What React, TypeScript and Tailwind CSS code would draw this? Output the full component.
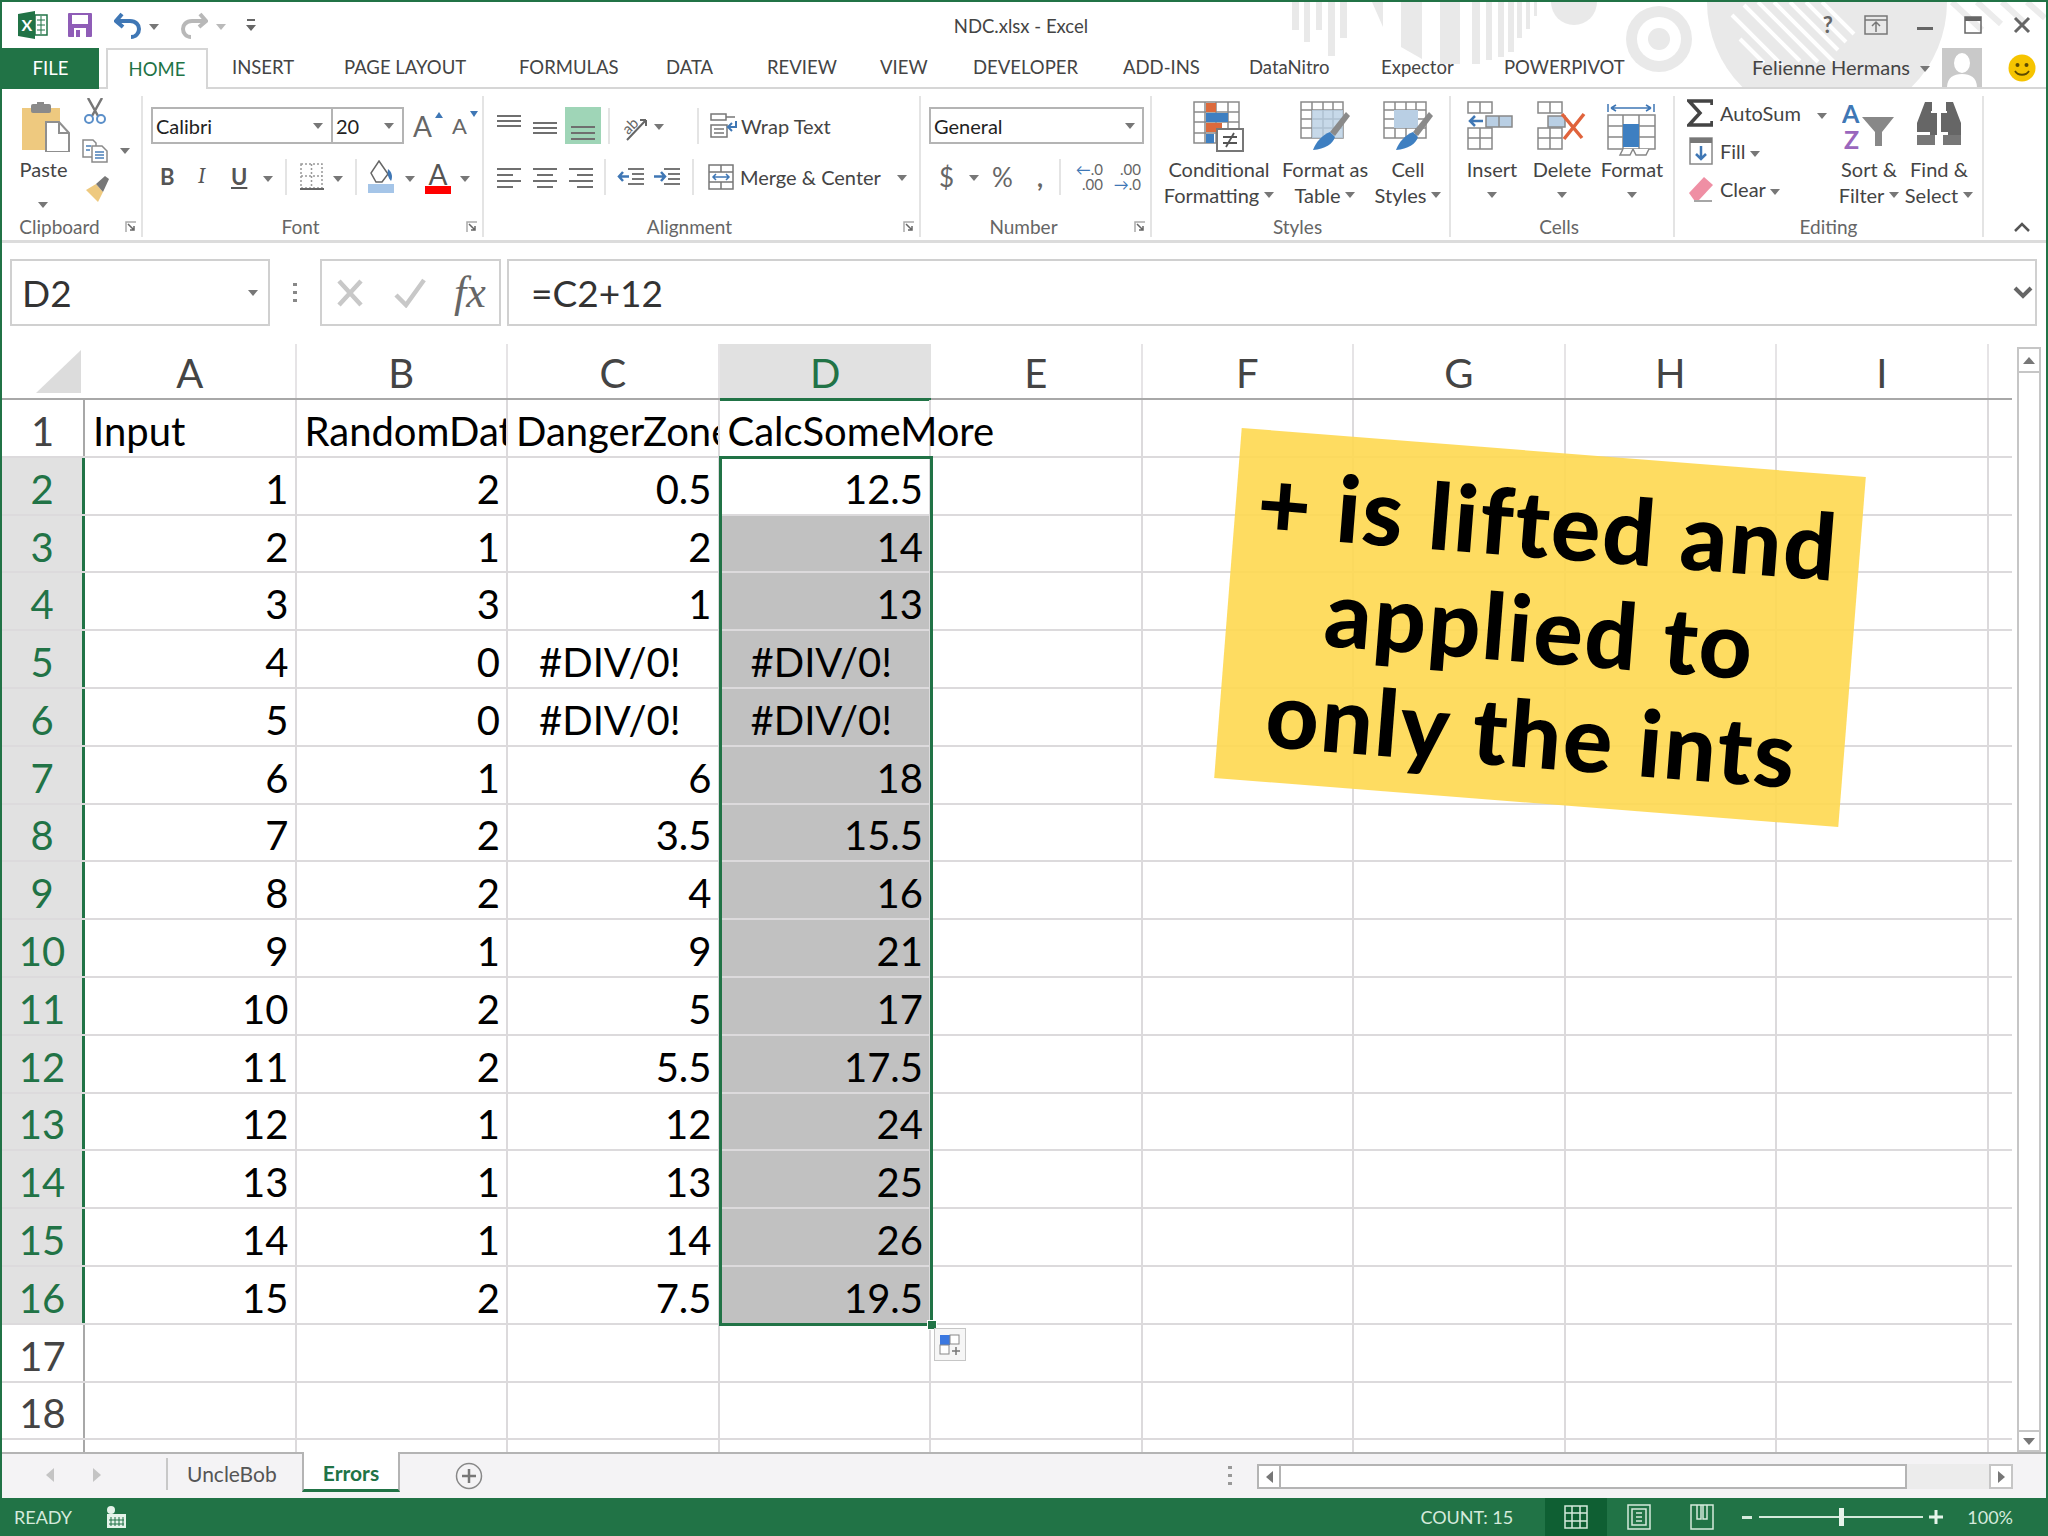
import React from 'react'

const GREEN = '#217346'

const Caret = ({ dark = false }: { dark?: boolean }) => (
  <svg width="10" height="6" className="shrink-0 inline-block">
    <path d="M0 0h10L5 6z" fill={dark ? '#555' : '#777'} />
  </svg>
)

const Launcher = () => (
  <svg width="12" height="12" className="shrink-0">
    <path d="M1 11V1h10" fill="none" stroke="#aaa" strokeWidth="1.5" />
    <path d="M3 3l6 6M9 5v4H5" fill="none" stroke="#666" strokeWidth="1.5" />
  </svg>
)

const Lines = ({ rows, w = 26, h = 30 }: { rows: number[][]; w?: number; h?: number }) => (
  <svg width={w} height={h} className="shrink-0">
    {rows.map((r, i) => (
      <rect key={i} x={r[0]} y={r[2]} width={r[1] - r[0]} height="2" fill="#6f6f6f" />
    ))}
  </svg>
)

const Sep = () => <div className="w-[2px] h-[36px] shrink-0 bg-[#e4e4e4]" />

const PasteIcon = () => (
  <svg width="50" height="50">
    <rect x="0" y="6" width="38" height="42" fill="#eec97f" />
    <rect x="9" y="2" width="20" height="9" rx="2" fill="#8a8a8a" />
    <rect x="15" y="0" width="7" height="5" fill="#8a8a8a" />
    <path d="M24 20h13l10 11v19H24z" fill="#fff" stroke="#8f8f8f" strokeWidth="2" />
    <path d="M37 20v11h10" fill="none" stroke="#8f8f8f" strokeWidth="2" />
  </svg>
)

const ScissorsIcon = () => (
  <svg width="26" height="26">
    <path d="M6 0l10 18M20 0L10 18" stroke="#777" strokeWidth="2.5" fill="none" />
    <circle cx="7" cy="21" r="4" fill="none" stroke="#5b8fc9" strokeWidth="2" />
    <circle cx="19" cy="21" r="4" fill="none" stroke="#5b8fc9" strokeWidth="2" />
  </svg>
)

const CopyIcon = () => (
  <svg width="26" height="24">
    <path d="M1 1h10l3 3v14H1z" fill="#fff" stroke="#8a8a8a" strokeWidth="1.5" />
    <path d="M10 7h10l5 5v11H10z" fill="#fff" stroke="#8a8a8a" strokeWidth="1.5" />
    <path d="M4 7h5M4 11h4M13 13h9M13 16h9M13 19h9" stroke="#4a7fb8" strokeWidth="1.5" />
  </svg>
)

const BrushIcon = () => (
  <svg width="28" height="28">
    <path d="M2 16l10-6 7 8-5 10z" fill="#eec97f" />
    <path d="M12 10l9-8 4 3-6 13z" fill="#777" />
  </svg>
)

const BorderIcon = () => (
  <svg width="24" height="28">
    <rect x="1" y="1" width="21" height="24" fill="none" stroke="#999" strokeWidth="1.5" strokeDasharray="2 2" />
    <path d="M11.5 1v24M1 13h21" stroke="#999" strokeWidth="1.5" strokeDasharray="2 2" />
    <path d="M0 26h24" stroke="#666" strokeWidth="2" />
  </svg>
)

const FillIcon = () => (
  <svg width="28" height="34">
    <path d="M12 1l9 13-6 8H9l-5-9z" fill="#fff" stroke="#666" strokeWidth="1.5" />
    <path d="M21 9c4 3 5 8 3 12-3-3-4-7-3-12z" fill="#3f77b5" />
    <rect x="1" y="24" width="26" height="9" fill="#a5c5e8" />
  </svg>
)

const OrientIcon = () => (
  <svg width="30" height="32">
    <text x="2" y="20" fontSize="15" fill="#666" transform="rotate(-45 12 14)" fontFamily="Lato, sans-serif">ab</text>
    <path d="M8 30L27 10M27 10h-6M27 10v6" stroke="#666" strokeWidth="2" fill="none" />
  </svg>
)

const IndentIcon = ({ flip = false }: { flip?: boolean }) => (
  <svg width="28" height="22">
    <path d="M11 3h16M15 8h12M15 13h12M11 18h16" stroke="#777" strokeWidth="2" />
    <path d={flip ? 'M1 10.5h11M8 6l4 4.5L8 15' : 'M12 10.5H2M6 6l-4 4.5L6 15'} stroke="#3f77b5" strokeWidth="2.5" fill="none" />
  </svg>
)

const WrapIcon = () => (
  <svg width="28" height="28">
    <path d="M1 2h15v6H1zM1 13h16v12H1z" fill="#fff" stroke="#777" strokeWidth="1.5" />
    <path d="M16 5h9M4 17h10M4 21h10" stroke="#777" strokeWidth="1.5" />
    <path d="M26 9v6h-7M22 11l-4 4 4 4" stroke="#3f77b5" strokeWidth="2" fill="none" />
  </svg>
)

const MergeIcon = () => (
  <svg width="26" height="26">
    <rect x="1" y="1" width="24" height="24" fill="#fff" stroke="#777" strokeWidth="1.5" />
    <path d="M1 8h24M1 18h24M13 1v7M13 18v7" stroke="#777" strokeWidth="1.5" />
    <path d="M5 13h16M8 10l-3 3 3 3M18 10l3 3-3 3" stroke="#3f77b5" strokeWidth="1.5" fill="none" />
  </svg>
)

const CondIcon = () => (
  <svg width="52" height="52">
    <path d="M1 1h45v41H1zM1 11h45M1 21h45M1 32h45M12 1v41M23 1v41M35 1v41" fill="#fff" stroke="#8a8a8a" strokeWidth="1.5" />
    <rect x="13" y="2" width="10" height="9" fill="#dc6a3c" />
    <rect x="13" y="12" width="22" height="9" fill="#3e7fc1" />
    <rect x="13" y="22" width="16" height="9" fill="#dc6a3c" />
    <rect x="13" y="33" width="8" height="9" fill="#3e7fc1" />
    <rect x="24" y="28" width="26" height="22" fill="#fff" stroke="#777" strokeWidth="2" />
    <path d="M30 36h14M30 42h14M41 32l-8 14" stroke="#555" strokeWidth="1.8" />
  </svg>
)

const TableIcon = ({ cell = false }: { cell?: boolean }) => (
  <svg width="50" height="50">
    <path d="M1 1h42v36H1zM1 9h42M1 18h42M1 27h42M12 1v36M23 1v36M33 1v36" fill="#fff" stroke="#8a8a8a" strokeWidth="1.5" />
    {cell ? <rect x="11" y="9" width="24" height="18" fill="#b9cfe4" /> : <rect x="12" y="9" width="31" height="28" fill="#b9cfe4" opacity="0.8" />}
    <path d="M30 31l16-20 4 4-15 20z" fill="#8a8a8a" />
    <path d="M30 31l5 5c-2 7-10 12-22 13 3-8 9-15 17-18z" fill="#3e7fc1" />
  </svg>
)

const InsertIcon = () => (
  <svg width="50" height="50">
    <path d="M1 1h24v11H1zM13 1v11M1 27h24v21H1zM1 37h24M13 27v21" fill="#fff" stroke="#888" strokeWidth="1.5" />
    <rect x="19" y="15" width="26" height="11" fill="#b9cfe4" stroke="#888" strokeWidth="1.5" />
    <path d="M32 15v11" stroke="#888" strokeWidth="1.5" />
    <path d="M16 20H3M8 15l-5 5 5 5" stroke="#3f77b5" strokeWidth="2.5" fill="none" />
  </svg>
)

const DeleteIcon = () => (
  <svg width="50" height="50">
    <path d="M1 1h24v11H1zM13 1v11M1 27h24v21H1zM1 37h24M13 27v21" fill="#fff" stroke="#888" strokeWidth="1.5" />
    <rect x="11" y="15" width="17" height="11" fill="#b9cfe4" stroke="#888" strokeWidth="1.5" />
    <path d="M25 13l20 24M47 13L27 38" stroke="#e0633c" strokeWidth="3.5" />
  </svg>
)

const FormatIcon = () => (
  <svg width="50" height="56">
    <path d="M1 3v8M47 3v8M4 7h40M4 7l5-3M4 7l5 3M44 7l-5-3M44 7l-5 3" stroke="#3f77b5" strokeWidth="1.5" fill="none" />
    <path d="M1 14h47v34H1zM1 25h47M1 36h47M16 14v34M32 14v34" fill="#fff" stroke="#888" strokeWidth="1.5" />
    <rect x="16" y="23" width="16" height="23" fill="#3e7fc1" />
    <path d="M16 48l-3 6h10l3-6M26 48l3 6h10l3-6" fill="#fff" stroke="#888" strokeWidth="1.5" />
  </svg>
)

const SortIcon = () => (
  <svg width="54" height="52">
    <text x="0" y="22" fontSize="25" fontWeight="700" fill="#3f77b5" fontFamily="Lato, sans-serif">A</text>
    <text x="2" y="48" fontSize="25" fontWeight="700" fill="#9a67bd" fontFamily="Lato, sans-serif">Z</text>
    <path d="M20 16h32L40 31v14h-7V31z" fill="#888" />
  </svg>
)

const FindIcon = () => (
  <svg width="48" height="46">
    <path d="M10 1h7v9h-1v2h6v22h-7v-3H2V22zM31 1h7l8 21v12H33v-3h-7V12h6v-2h-1z" fill="#666" />
    <rect x="2" y="34" width="18" height="10" fill="#777" />
    <rect x="28" y="34" width="18" height="10" fill="#777" />
  </svg>
)

const BigBtn = ({ icon, lines, w }: { icon: React.ReactNode; lines: string[]; w: number }) => (
  <div className="flex flex-col items-center shrink-0 text-[20px] text-[#444]" style={{ width: w }}>
    <div className="h-[60px] pt-[5px] flex items-start justify-center">{icon}</div>
    <div className="h-[26px] leading-[26px] whitespace-nowrap">{lines[0]}</div>
    <div className="h-[26px] leading-[26px] whitespace-nowrap flex items-center gap-[5px]">
      {lines[1]}
      <Caret />
    </div>
  </div>
)

const Group = ({
  label,
  w,
  launcher = false,
  labelClass = '',
  children,
}: {
  label: string
  w: number
  launcher?: boolean
  labelClass?: string
  children: React.ReactNode
}) => (
  <div className="h-[141px] flex flex-col border-r-2 border-[#e4e4e4] shrink-0" style={{ width: w }}>
    <div className="flex-1 min-h-0 relative">{children}</div>
    <div className={`h-[22px] flex items-center relative text-[19px] text-[#666] ${labelClass}`}>
      <span className="flex-1 text-center leading-none">{label}</span>
      {launcher && (
        <span className="absolute right-[4px] top-[6px]">
          <Launcher />
        </span>
      )}
    </div>
  </div>
)

const ToolRows = ({ children }: { children: React.ReactNode }) => (
  <div className="flex flex-col pt-[11px] gap-[14px]">{children}</div>
)

const tabs: [string, string][] = [
  ['INSERT', 'w-[112px]'],
  ['PAGE LAYOUT', 'w-[175px]'],
  ['FORMULAS', 'w-[147px]'],
  ['DATA', 'w-[101px]'],
  ['REVIEW', 'w-[113px]'],
  ['VIEW', 'w-[93px]'],
  ['DEVELOPER', 'w-[150px]'],
  ['ADD-INS', 'w-[126px]'],
  ['DataNitro', 'w-[132px]'],
  ['Expector', 'w-[123px]'],
  ['POWERPIVOT', 'w-[125px]'],
]

const columns = ['A', 'B', 'C', 'D', 'E', 'F', 'G', 'H', 'I', 'J']

const data: (string | number)[][] = [
  [1, 2, 0.5, 12.5],
  [2, 1, 2, 14],
  [3, 3, 1, 13],
  [4, 0, '#DIV/0!', '#DIV/0!'],
  [5, 0, '#DIV/0!', '#DIV/0!'],
  [6, 1, 6, 18],
  [7, 2, 3.5, 15.5],
  [8, 2, 4, 16],
  [9, 1, 9, 21],
  [10, 2, 5, 17],
  [11, 2, 5.5, 17.5],
  [12, 1, 12, 24],
  [13, 1, 13, 25],
  [14, 1, 14, 26],
  [15, 2, 7.5, 19.5],
]

const cellBase = 'w-[211.5px] shrink-0 h-full pt-[6px] border-r-2 border-[#dcdadc] flex items-center'
const rowBase = 'h-[57.8px] flex border-b-2 border-[#dcdadc] text-[40px] text-black'

const RowHead = ({ n, active = false }: { n: number; active?: boolean }) => (
  <div
    className={
      active
        ? 'w-[83px] shrink-0 h-full pt-[6px] bg-[#e1e1e1] border-r-[3px] border-[#217346] text-[#217346] flex items-center justify-center'
        : 'w-[83px] shrink-0 h-full pt-[6px] border-r-2 border-[#a8a8a8] text-[#444] flex items-center justify-center'
    }
  >
    {n}
  </div>
)

const Sheet = () => (
  <div className="relative w-[2010px] h-full overflow-hidden">
    <div className="h-[56px] flex border-b-2 border-[#a8a8a8] text-[40px] text-[#444]">
      <div className="w-[83px] shrink-0 h-full flex items-end pl-[34px] pb-[5px]">
        <svg width="46" height="43">
          <path d="M45 0v43H0z" fill="#dcdcdc" />
        </svg>
      </div>
      {columns.map(c => (
        <div
          key={c}
          className={
            c === 'D'
              ? 'w-[211.5px] shrink-0 h-[57px] pt-[4px] bg-[#e1e1e1] border-b-[3px] border-[#217346] text-[#217346] flex items-center justify-center'
              : 'w-[211.5px] shrink-0 h-full pt-[4px] border-r-2 border-[#e6e4e6] flex items-center justify-center'
          }
        >
          {c}
        </div>
      ))}
    </div>
    <div className={rowBase}>
      <RowHead n={1} />
      {['Input', 'RandomData', 'DangerZone', 'CalcSomeMore'].map((t, i) => (
        <div key={t} className={`${cellBase} pl-[8px] whitespace-nowrap ${i < 3 ? 'overflow-hidden' : 'overflow-visible border-r-0'}`}>
          {t}
        </div>
      ))}
      {columns.slice(4).map(c => (
        <div key={c} className={cellBase} />
      ))}
    </div>
    {data.map((row, r) => (
      <div key={r} className={rowBase}>
        <RowHead n={r + 2} active />
        {row.map((v, c) => (
          <div
            key={c}
            className={`${cellBase} pr-[6px] ${typeof v === 'string' ? 'justify-center' : 'justify-end'} ${
              c === 3 && r > 0 ? 'bg-[#c1c1c1] border-[#c1c1c1]' : ''
            }`}
          >
            {v}
          </div>
        ))}
        {columns.slice(4).map(c => (
          <div key={c} className={cellBase} />
        ))}
      </div>
    ))}
    {[17, 18, 19].map(n => (
      <div key={n} className={rowBase}>
        <RowHead n={n} />
        {columns.map(c => (
          <div key={c} className={cellBase} />
        ))}
      </div>
    ))}
    <div className="absolute left-[717px] top-[112px] w-[214px] h-[870px] border-[3px] border-[#217346] pointer-events-none" />
    <div className="absolute left-[925px] top-[976px] w-[10px] h-[10px] bg-[#217346] border border-white" />
    <div className="absolute left-[932px] top-[984px] w-[32px] h-[33px] bg-[#f6f6f6] border border-[#c6c6c6] flex items-center justify-center">
      <svg width="24" height="24">
        <rect x="2" y="2" width="10" height="10" fill="#3b78e0" />
        <rect x="12" y="2" width="9" height="9" fill="#fff" stroke="#888" />
        <rect x="2" y="12" width="9" height="9" fill="#fff" stroke="#888" />
        <path d="M14 18h8M18 14v8" stroke="#777" strokeWidth="1.5" />
      </svg>
    </div>
  </div>
)

const Note = () => (
  <div className="absolute left-[1225px] top-[450px] w-[626px] h-[351px] rotate-[4.5deg] bg-[#fed850]/90 flex flex-col items-center justify-center text-black font-black text-[92px] tracking-[2px] leading-[105px] whitespace-nowrap">
    <div>+ is lifted and</div>
    <div>applied to</div>
    <div>only the ints</div>
  </div>
)

const Watermark = () => (
  <svg width="2048" height="86" className="absolute left-0 top-0" fill="#e9e9e9">
    <rect x="1290" width="7" height="28" />
    <rect x="1302" width="6" height="40" />
    <rect x="1314" width="6" height="28" />
    <rect x="1326" width="7" height="54" />
    <rect x="1338" width="7" height="36" />
    <path d="M1370 0h11v25zM1399 0h21v57l-21-12z" />
    <rect x="1438" width="20" height="62" />
    <rect x="1470" width="8" height="62" />
    <rect x="1484" width="6" height="58" />
    <rect x="1496" width="6" height="55" />
    <rect x="1506" width="6" height="50" />
    <rect x="1515" width="5" height="36" />
    <rect x="1524" width="4" height="27" />
    <rect x="1532" width="3" height="14" />
    <circle cx="1572" cy="0" r="23" />
    <circle cx="1657" cy="37" r="33" />
    <circle cx="1657" cy="37" r="22" fill="#fff" />
    <circle cx="1657" cy="37" r="11" />
    <circle cx="1825" cy="0" r="120" />
    <path d="M1730 13l50 50M1738 37l24 24M1742 3l56 56M1756 0l60 60M1772 0l60 60M1788 0l48 48M1804 0l40 40M1820 0l32 32" stroke="#fff" strokeWidth="4" />
    <path d="M1950 0l30 28M1975 0l24 22M2000 0l24 22M2025 0l18 16" stroke="#ececec" strokeWidth="6" />
  </svg>
)

const TitleBar = () => (
  <div className="relative h-[46px] flex items-center shrink-0">
    <Watermark />
    <div className="absolute inset-x-0 top-0 h-full pr-[6px] pt-[3px] flex items-center justify-center text-[18.5px] text-[#444]">NDC.xlsx - Excel</div>
    <div className="relative flex items-center w-full h-full">
      <svg width="30" height="28" className="ml-[16px]">
        <path d="M0 3L17 0v28L0 25z" fill={GREEN} />
        <rect x="17" y="4" width="12" height="20" fill="#fff" stroke={GREEN} strokeWidth="1.5" />
        <path d="M19 9h8M19 14h8M19 19h8M23 5v18" stroke={GREEN} strokeWidth="1" />
        <text x="3.5" y="20" fontSize="16" fontWeight="700" fill="#fff" fontFamily="Lato, sans-serif">X</text>
      </svg>
      <svg width="24" height="24" className="ml-[20px]">
        <rect x="0" y="0" width="24" height="24" rx="1" fill="#8f5db7" />
        <rect x="4" y="2" width="16" height="9" fill="#fff" />
        <rect x="6" y="15" width="12" height="9" fill="#fff" />
        <rect x="8" y="17" width="4" height="7" fill="#8f5db7" />
      </svg>
      <svg width="30" height="28" className="ml-[22px]">
        <path d="M8 3L2 10l7 6M3 10h13c6 0 9 4 9 8s-3 8-8 8" fill="none" stroke="#3f77b5" strokeWidth="4" />
      </svg>
      <span className="ml-[5px]">
        <Caret />
      </span>
      <svg width="28" height="28" className="ml-[21px]">
        <path d="M20 3l6 7-7 6M25 10H12c-6 0-9 4-9 8s3 8 8 8" fill="none" stroke="#b8b8b8" strokeWidth="4" />
      </svg>
      <span className="ml-[8px] opacity-50">
        <Caret />
      </span>
      <svg width="12" height="14" className="ml-[19px]">
        <path d="M2 1h8v2H2zM1 7h10L6 13z" fill="#666" />
      </svg>
      <div className="ml-auto flex items-center">
        <span className="w-[48.5px] flex justify-center text-[22px] font-bold leading-none text-[#666]">?</span>
        <span className="w-[48.5px] flex justify-center">
          <svg width="24" height="20">
            <rect x="1" y="1" width="22" height="18" fill="none" stroke="#777" strokeWidth="1.5" />
            <path d="M1 5h22M12 17V8M8 11l4-4 4 4" stroke="#777" strokeWidth="1.5" fill="none" />
          </svg>
        </span>
        <span className="w-[48.5px] flex justify-center pt-[10px]">
          <svg width="16" height="6">
            <rect width="16" height="3" fill="#666" />
          </svg>
        </span>
        <span className="w-[48.5px] flex justify-center">
          <svg width="18" height="18">
            <rect x="1" y="1" width="16" height="16" fill="none" stroke="#666" strokeWidth="1.5" />
            <rect x="1" y="1" width="16" height="4" fill="#666" />
          </svg>
        </span>
        <span className="w-[48.5px] flex justify-center">
          <svg width="18" height="18">
            <path d="M2 2l14 14M16 2L2 16" stroke="#666" strokeWidth="3" />
          </svg>
        </span>
      </div>
    </div>
  </div>
)

const TabRow = () => (
  <div className="relative h-[41px] flex items-stretch border-b-2 border-[#d6d6d6] shrink-0 text-[18.5px]">
    <div className="w-[97px] h-[41px] bg-[#217346] text-white flex items-center justify-center">FILE</div>
    <div className="ml-[7px] w-[102px] h-[41px] bg-white border-x-2 border-t-2 border-[#d6d6d6] text-[#217346] flex items-center justify-center">HOME</div>
    <div className="ml-[24px] flex items-center">
      {tabs.map(([label, width]) => (
        <div key={label} className={`whitespace-nowrap text-[#444] ${width}`}>
          {label}
        </div>
      ))}
    </div>
    <div className="ml-auto flex items-center h-full">
      <span className="text-[20px] text-[#444] whitespace-nowrap mb-[2px]">Felienne Hermans</span>
      <span className="ml-[10px]">
        <Caret />
      </span>
      <div className="ml-[12px] w-[40px] h-[39px] bg-[#c9c9c9] overflow-hidden">
        <svg width="40" height="40">
          <ellipse cx="20" cy="15" rx="8" ry="10" fill="#fff" />
          <path d="M5 40c0-10 6-14 15-14s15 4 15 14z" fill="#fff" />
        </svg>
      </div>
      <svg width="28" height="28" className="ml-[26px] mr-[10px]">
        <circle cx="14" cy="14" r="13.5" fill="#f6c400" />
        <circle cx="9.5" cy="11" r="2" fill="#5c4a00" />
        <circle cx="18.5" cy="11" r="2" fill="#5c4a00" />
        <path d="M7 17c3 5 11 5 14 0" fill="none" stroke="#5c4a00" strokeWidth="1.8" />
      </svg>
    </div>
  </div>
)

const Ribbon = () => (
  <div className="relative h-[154px] flex items-start pt-[7px] border-b-[3px] border-[#dcdcdc] shrink-0 text-[#444]">
    <Group label="Clipboard" w={141} launcher labelClass="pr-[24px]">
      <div className="absolute left-[20px] top-[6px]">
        <PasteIcon />
      </div>
      <div className="absolute left-0 top-[60px] w-[83px] text-center text-[20px] leading-[26px]">Paste</div>
      <div className="absolute left-[36px] top-[95px]">
        <Caret />
      </div>
      <div className="absolute left-[80px] top-[2px]">
        <ScissorsIcon />
      </div>
      <div className="absolute left-[80px] top-[43px] flex items-center gap-[12px]">
        <CopyIcon />
        <Caret />
      </div>
      <div className="absolute left-[82px] top-[78px]">
        <BrushIcon />
      </div>
    </Group>

    <Group label="Font" w={341} launcher labelClass="pr-[24px]">
      <ToolRows>
        <div className="flex items-center h-[37px] ml-[8px]">
          <div className="w-[182px] h-[37px] border-2 border-[#b4b4b4] flex items-center justify-between pl-[3px] pr-[8px] text-[20px] text-[#222]">
            Calibri <Caret />
          </div>
          <div className="w-[71px] h-[37px] border-2 border-l-0 border-[#b4b4b4] flex items-center justify-between pl-[3px] pr-[8px] text-[20px] text-[#222]">
            20 <Caret />
          </div>
          <div className="ml-[9px] w-[24px] text-[28px] leading-none text-[#666] relative">
            A
            <svg width="8" height="6" className="absolute right-[-6px] top-0">
              <path d="M0 6h8L4 0z" fill="#3f77b5" />
            </svg>
          </div>
          <div className="ml-[15px] w-[20px] text-[22px] leading-none text-[#666] relative">
            A
            <svg width="8" height="6" className="absolute right-[-6px] top-[-4px]">
              <path d="M0 0h8L4 6z" fill="#3f77b5" />
            </svg>
          </div>
        </div>
        <div className="flex items-center h-[37px] text-[22px] text-[#555]">
          <span className="ml-[17px] w-[14px] font-bold">B</span>
          <span className="ml-[24px] w-[10px] italic font-serif">I</span>
          <span className="ml-[23px] w-[16px] underline font-bold">U</span>
          <span className="ml-[16px]"><Caret /></span>
          <span className="ml-[12px]"><Sep /></span>
          <span className="ml-[13px]"><BorderIcon /></span>
          <span className="ml-[9px]"><Caret /></span>
          <span className="ml-[12px]"><Sep /></span>
          <span className="ml-[10px]"><FillIcon /></span>
          <span className="ml-[10px]"><Caret /></span>
          <div className="ml-[10px] w-[26px] h-[34px] relative text-center text-[28px] leading-[28px] text-[#555]">
            A
            <div className="absolute left-0 bottom-0 w-[26px] h-[8px] bg-[#f00]" />
          </div>
          <span className="ml-[9px]"><Caret /></span>
        </div>
      </ToolRows>
    </Group>

    <Group label="Alignment" w={437} launcher labelClass="pr-[24px]">
      <ToolRows>
        <div className="flex items-center h-[37px]">
          <span className="ml-[13px]"><Lines rows={[[0, 24, 4], [0, 24, 9], [0, 24, 14]]} /></span>
          <span className="ml-[10px]"><Lines rows={[[0, 24, 11], [0, 24, 16], [0, 24, 21]]} /></span>
          <div className="ml-[6px] w-[36px] h-[37px] bg-[#9fd5b7] flex items-end justify-center">
            <Lines rows={[[1, 25, 12], [1, 25, 18], [1, 25, 24]]} />
          </div>
          <span className="ml-[7px]"><Sep /></span>
          <span className="ml-[9px]"><OrientIcon /></span>
          <span className="ml-[5px]"><Caret /></span>
          <span className="ml-[33px]"><Sep /></span>
          <span className="ml-[11px]"><WrapIcon /></span>
          <span className="ml-[3px] text-[20px] whitespace-nowrap">Wrap Text</span>
        </div>
        <div className="flex items-center h-[37px]">
          <span className="ml-[13px]"><Lines rows={[[0, 24, 6], [0, 16, 12], [0, 24, 18], [0, 16, 24]]} /></span>
          <span className="ml-[10px]"><Lines rows={[[0, 24, 6], [4, 20, 12], [0, 24, 18], [4, 20, 24]]} /></span>
          <span className="ml-[10px]"><Lines rows={[[0, 24, 6], [8, 24, 12], [0, 24, 18], [8, 24, 24]]} /></span>
          <span className="ml-[9px]"><Sep /></span>
          <span className="ml-[11px]"><IndentIcon /></span>
          <span className="ml-[8px]"><IndentIcon flip /></span>
          <span className="ml-[11px]"><Sep /></span>
          <span className="ml-[14px]"><MergeIcon /></span>
          <span className="ml-[6px] text-[20px] whitespace-nowrap">Merge &amp; Center</span>
          <span className="ml-[16px]"><Caret /></span>
        </div>
      </ToolRows>
    </Group>

    <Group label="Number" w={231} launcher labelClass="pr-[24px]">
      <ToolRows>
        <div className="ml-[8px] w-[215px] h-[37px] border-2 border-[#b4b4b4] flex items-center justify-between pl-[3px] pr-[7px] text-[20px] text-[#222]">
          General <Caret />
        </div>
        <div className="flex items-center h-[37px] text-[#666]">
          <span className="ml-[18px] w-[16px] text-[26px] leading-none">$</span>
          <span className="ml-[14px]"><Caret /></span>
          <span className="ml-[13px] w-[34px] text-[26px] leading-none">%</span>
          <span className="ml-[11px] w-[10px] text-[26px] font-bold leading-none">,</span>
          <span className="ml-[12px]"><Sep /></span>
          <div className="ml-[14px] w-[28px] text-[15px] leading-[15px] text-right">
            <span className="text-[#3f77b5]">←</span>.0<br />.00
          </div>
          <div className="ml-[8px] w-[30px] text-[15px] leading-[15px] text-right">
            .00<br /><span className="text-[#3f77b5]">→</span>.0
          </div>
        </div>
      </ToolRows>
    </Group>

    <Group label="Styles" w={299} labelClass="pr-[6px]">
      <div className="flex pl-[12px]">
        <BigBtn w={110} lines={['Conditional', 'Formatting']} icon={<CondIcon />} />
        <BigBtn w={102} lines={['Format as', 'Table']} icon={<TableIcon />} />
        <BigBtn w={64} lines={['Cell', 'Styles']} icon={<TableIcon cell />} />
      </div>
    </Group>

    <Group label="Cells" w={224} labelClass="pr-[6px]">
      <div className="flex pl-[6px]">
        <BigBtn w={70} lines={['Insert', '']} icon={<InsertIcon />} />
        <BigBtn w={70} lines={['Delete', '']} icon={<DeleteIcon />} />
        <BigBtn w={70} lines={['Format', '']} icon={<FormatIcon />} />
      </div>
    </Group>

    <Group label="Editing" w={309} labelClass="pr-[0px]">
      <div className="flex">
        <div className="w-[159px] pl-[12px] flex flex-col text-[20px] text-[#444]">
          <div className="h-[38px] mt-[-2px] flex items-center">
            <svg width="26" height="28" className="shrink-0">
              <path d="M25 6V2H2l11 12L2 26h23v-4" fill="none" stroke="#444" strokeWidth="3.5" />
            </svg>
            <span className="ml-[7px]">AutoSum</span>
            <span className="ml-[16px]"><Caret /></span>
          </div>
          <div className="h-[38px] flex items-center">
            <svg width="24" height="28" className="ml-[2px]">
              <rect x="1" y="1" width="22" height="26" fill="#fff" stroke="#888" strokeWidth="1.5" />
              <rect x="1" y="1" width="22" height="5" fill="#777" />
              <path d="M12 9v13M7 17l5 5 5-5" stroke="#3f77b5" strokeWidth="2.5" fill="none" />
            </svg>
            <span className="ml-[7px]">Fill</span>
            <span className="ml-[4px]"><Caret /></span>
          </div>
          <div className="h-[38px] flex items-center">
            <svg width="26" height="28" className="ml-[1px]">
              <path d="M1 18L16 2l9 8-14 15H6z" fill="#ef8fa4" />
              <path d="M6 26h18" stroke="#888" strokeWidth="1.5" />
            </svg>
            <span className="ml-[6px]">Clear</span>
            <span className="ml-[4px]"><Caret /></span>
          </div>
        </div>
        <BigBtn w={70} lines={['Sort &', 'Filter']} icon={<SortIcon />} />
        <BigBtn w={70} lines={['Find &', 'Select']} icon={<FindIcon />} />
      </div>
    </Group>

    <div className="flex-1 h-[141px] flex items-end justify-center pb-[5px] pl-[14px]">
      <svg width="16" height="10">
        <path d="M1 9l7-7 7 7" fill="none" stroke="#555" strokeWidth="2.5" />
      </svg>
    </div>
  </div>
)

const FormulaBar = () => (
  <div className="mt-[16px] h-[67px] flex items-stretch shrink-0 text-[37px] text-[#333]">
    <div className="ml-[8px] w-[260px] border-2 border-[#d0d0d0] flex items-center justify-between pl-[10px] pr-[10px]">
      <span>D2</span>
      <Caret />
    </div>
    <div className="w-[50px] flex items-center justify-center">
      <svg width="4" height="20" fill="#888">
        <rect y="0" width="4" height="3" />
        <rect y="8" width="4" height="3" />
        <rect y="16" width="4" height="3" />
      </svg>
    </div>
    <div className="w-[181px] border-2 border-[#d0d0d0] flex items-center">
      <svg width="28" height="28" className="ml-[14px] shrink-0">
        <path d="M3 2l22 24M25 2L3 26" stroke="#c8c8c8" strokeWidth="4.5" />
      </svg>
      <svg width="34" height="30" className="ml-[29px] shrink-0">
        <path d="M3 17l10 10L31 2" fill="none" stroke="#c8c8c8" strokeWidth="4.5" />
      </svg>
      <span className="ml-[27px] font-['Liberation_Serif',serif] italic text-[44px] leading-none text-[#666]">fx</span>
    </div>
    <div className="ml-[6px] w-[1530px] border-2 border-[#d0d0d0] flex items-center justify-between pl-[22px] pr-[2px]">
      <span>=C2+12</span>
      <svg width="20" height="14">
        <path d="M2 2l8 8 8-8" fill="none" stroke="#666" strokeWidth="4" />
      </svg>
    </div>
  </div>
)

const VScroll = () => (
  <div className="ml-[5px] w-[24px] pt-[3px] flex flex-col h-full">
    <div className="h-[26px] border-2 border-[#c6c6c6] flex items-center justify-center shrink-0">
      <svg width="12" height="7"><path d="M0 7h12L6 0z" fill="#777" /></svg>
    </div>
    <div className="flex-1 border-x-2 border-[#c6c6c6] bg-white" />
    <div className="h-[22px] border-2 border-[#c6c6c6] flex items-center justify-center shrink-0">
      <svg width="12" height="7"><path d="M0 0h12L6 7z" fill="#777" /></svg>
    </div>
  </div>
)

const SheetBar = () => (
  <div className="h-[46px] flex items-start bg-[#f4f3f5] border-t-2 border-[#b4b4b4] shrink-0 text-[21px]">
    <svg width="8" height="14" className="ml-[44px] mt-[14px]"><path d="M8 0v14L0 7z" fill="#c4c4c4" /></svg>
    <svg width="8" height="14" className="ml-[39px] mt-[14px]"><path d="M0 0v14l8-7z" fill="#c4c4c4" /></svg>
    <div className="ml-[65px] mt-[4px] w-[2px] h-[32px] bg-[#c8c8c8]" />
    <div className="ml-[19px] mt-[4px] w-[115px] text-[#555]">UncleBob</div>
    <div className="w-[98px] h-[40px] pt-[5px] bg-white border-x-2 border-b-[3px] border-x-[#b4b4b4] border-b-[#217346] -mt-[2px] flex items-center justify-center text-[#217346] font-bold">
      Errors
    </div>
    <svg width="28" height="28" className="ml-[55px] mt-[8px]">
      <circle cx="14" cy="14" r="12.5" fill="none" stroke="#888" strokeWidth="1.5" />
      <path d="M14 7v14M7 14h14" stroke="#777" strokeWidth="2.5" />
    </svg>
    <svg width="4" height="20" fill="#999" className="ml-[745px] mt-[12px]">
      <rect y="0" width="4" height="3" />
      <rect y="8" width="4" height="3" />
      <rect y="16" width="4" height="3" />
    </svg>
    <div className="ml-[25px] mt-[10px] h-[25px] w-[756px] flex items-stretch">
      <div className="w-[24px] border-2 border-[#b4b4b4] bg-white flex items-center justify-center">
        <svg width="7" height="12"><path d="M7 0v12L0 6z" fill="#777" /></svg>
      </div>
      <div className="w-[626px] border-y-2 border-r-2 border-[#b4b4b4] bg-white" />
      <div className="flex-1 bg-[#ececec]" />
      <div className="w-[24px] border-2 border-[#c6c6c6] bg-white flex items-center justify-center">
        <svg width="7" height="12"><path d="M0 0v12l7-6z" fill="#777" /></svg>
      </div>
    </div>
  </div>
)

const StatusBar = () => (
  <div className="h-[38px] bg-[#217346] flex items-center text-[#d5eadc] text-[18px] shrink-0">
    <span className="ml-[12px]">READY</span>
    <svg width="22" height="24" className="ml-[33px]" fill="none">
      <circle cx="6" cy="5" r="4" fill="#e4f2e9" />
      <rect x="2" y="9" width="19" height="14" fill="#e4f2e9" />
      <path d="M6 12v9M10 12v9M14 12v9M18 12v9M4 15h15M4 19h15" stroke={GREEN} strokeWidth="1" />
    </svg>
    <span className="ml-auto whitespace-nowrap">COUNT: 15</span>
    <div className="ml-[32px] w-[62px] h-[38px] bg-[#0f5f33] flex items-center justify-center">
      <svg width="24" height="24" fill="none" stroke="#d5eadc" strokeWidth="1.5">
        <path d="M1 1h22v22H1zM1 8h22M1 16h22M8 1v22M16 1v22" />
      </svg>
    </div>
    <svg width="24" height="26" className="ml-[20px]" fill="none" stroke="#d5eadc" strokeWidth="1.5">
      <path d="M1 1h22v24H1zM5 5h14v16H5zM9 9h6M9 13h6M9 17h6" />
    </svg>
    <svg width="24" height="26" className="ml-[39px]" fill="none" stroke="#d5eadc" strokeWidth="1.5">
      <path d="M1 1h22v24H1zM7 1v14h4V1M13 1v14h4V1" />
    </svg>
    <span className="ml-[28px] w-[10px] h-[3px] bg-[#d5eadc]" />
    <div className="ml-[7px] w-[164px] h-[2px] bg-[#d5eadc] relative">
      <div className="absolute left-[80px] top-[-8px] w-[5px] h-[18px] bg-[#e6f3ea]" />
    </div>
    <svg width="14" height="14" className="ml-[6px]"><path d="M7 0v14M0 7h14" stroke="#e6f3ea" strokeWidth="3" /></svg>
    <span className="ml-[24px] mr-[33px] whitespace-nowrap">100%</span>
  </div>
)

export default function App() {
  return (
    <div className="relative w-[2048px] h-[1536px] overflow-hidden bg-white border-x-2 border-t-2 border-[#217346] flex flex-col font-['Lato','Noto_Sans',sans-serif]">
      <TitleBar />
      <TabRow />
      <Ribbon />
      <FormulaBar />
      <div className="mt-[18px] h-[1108px] flex shrink-0">
        <Sheet />
        <VScroll />
      </div>
      <SheetBar />
      <StatusBar />
      <Note />
    </div>
  )
}
